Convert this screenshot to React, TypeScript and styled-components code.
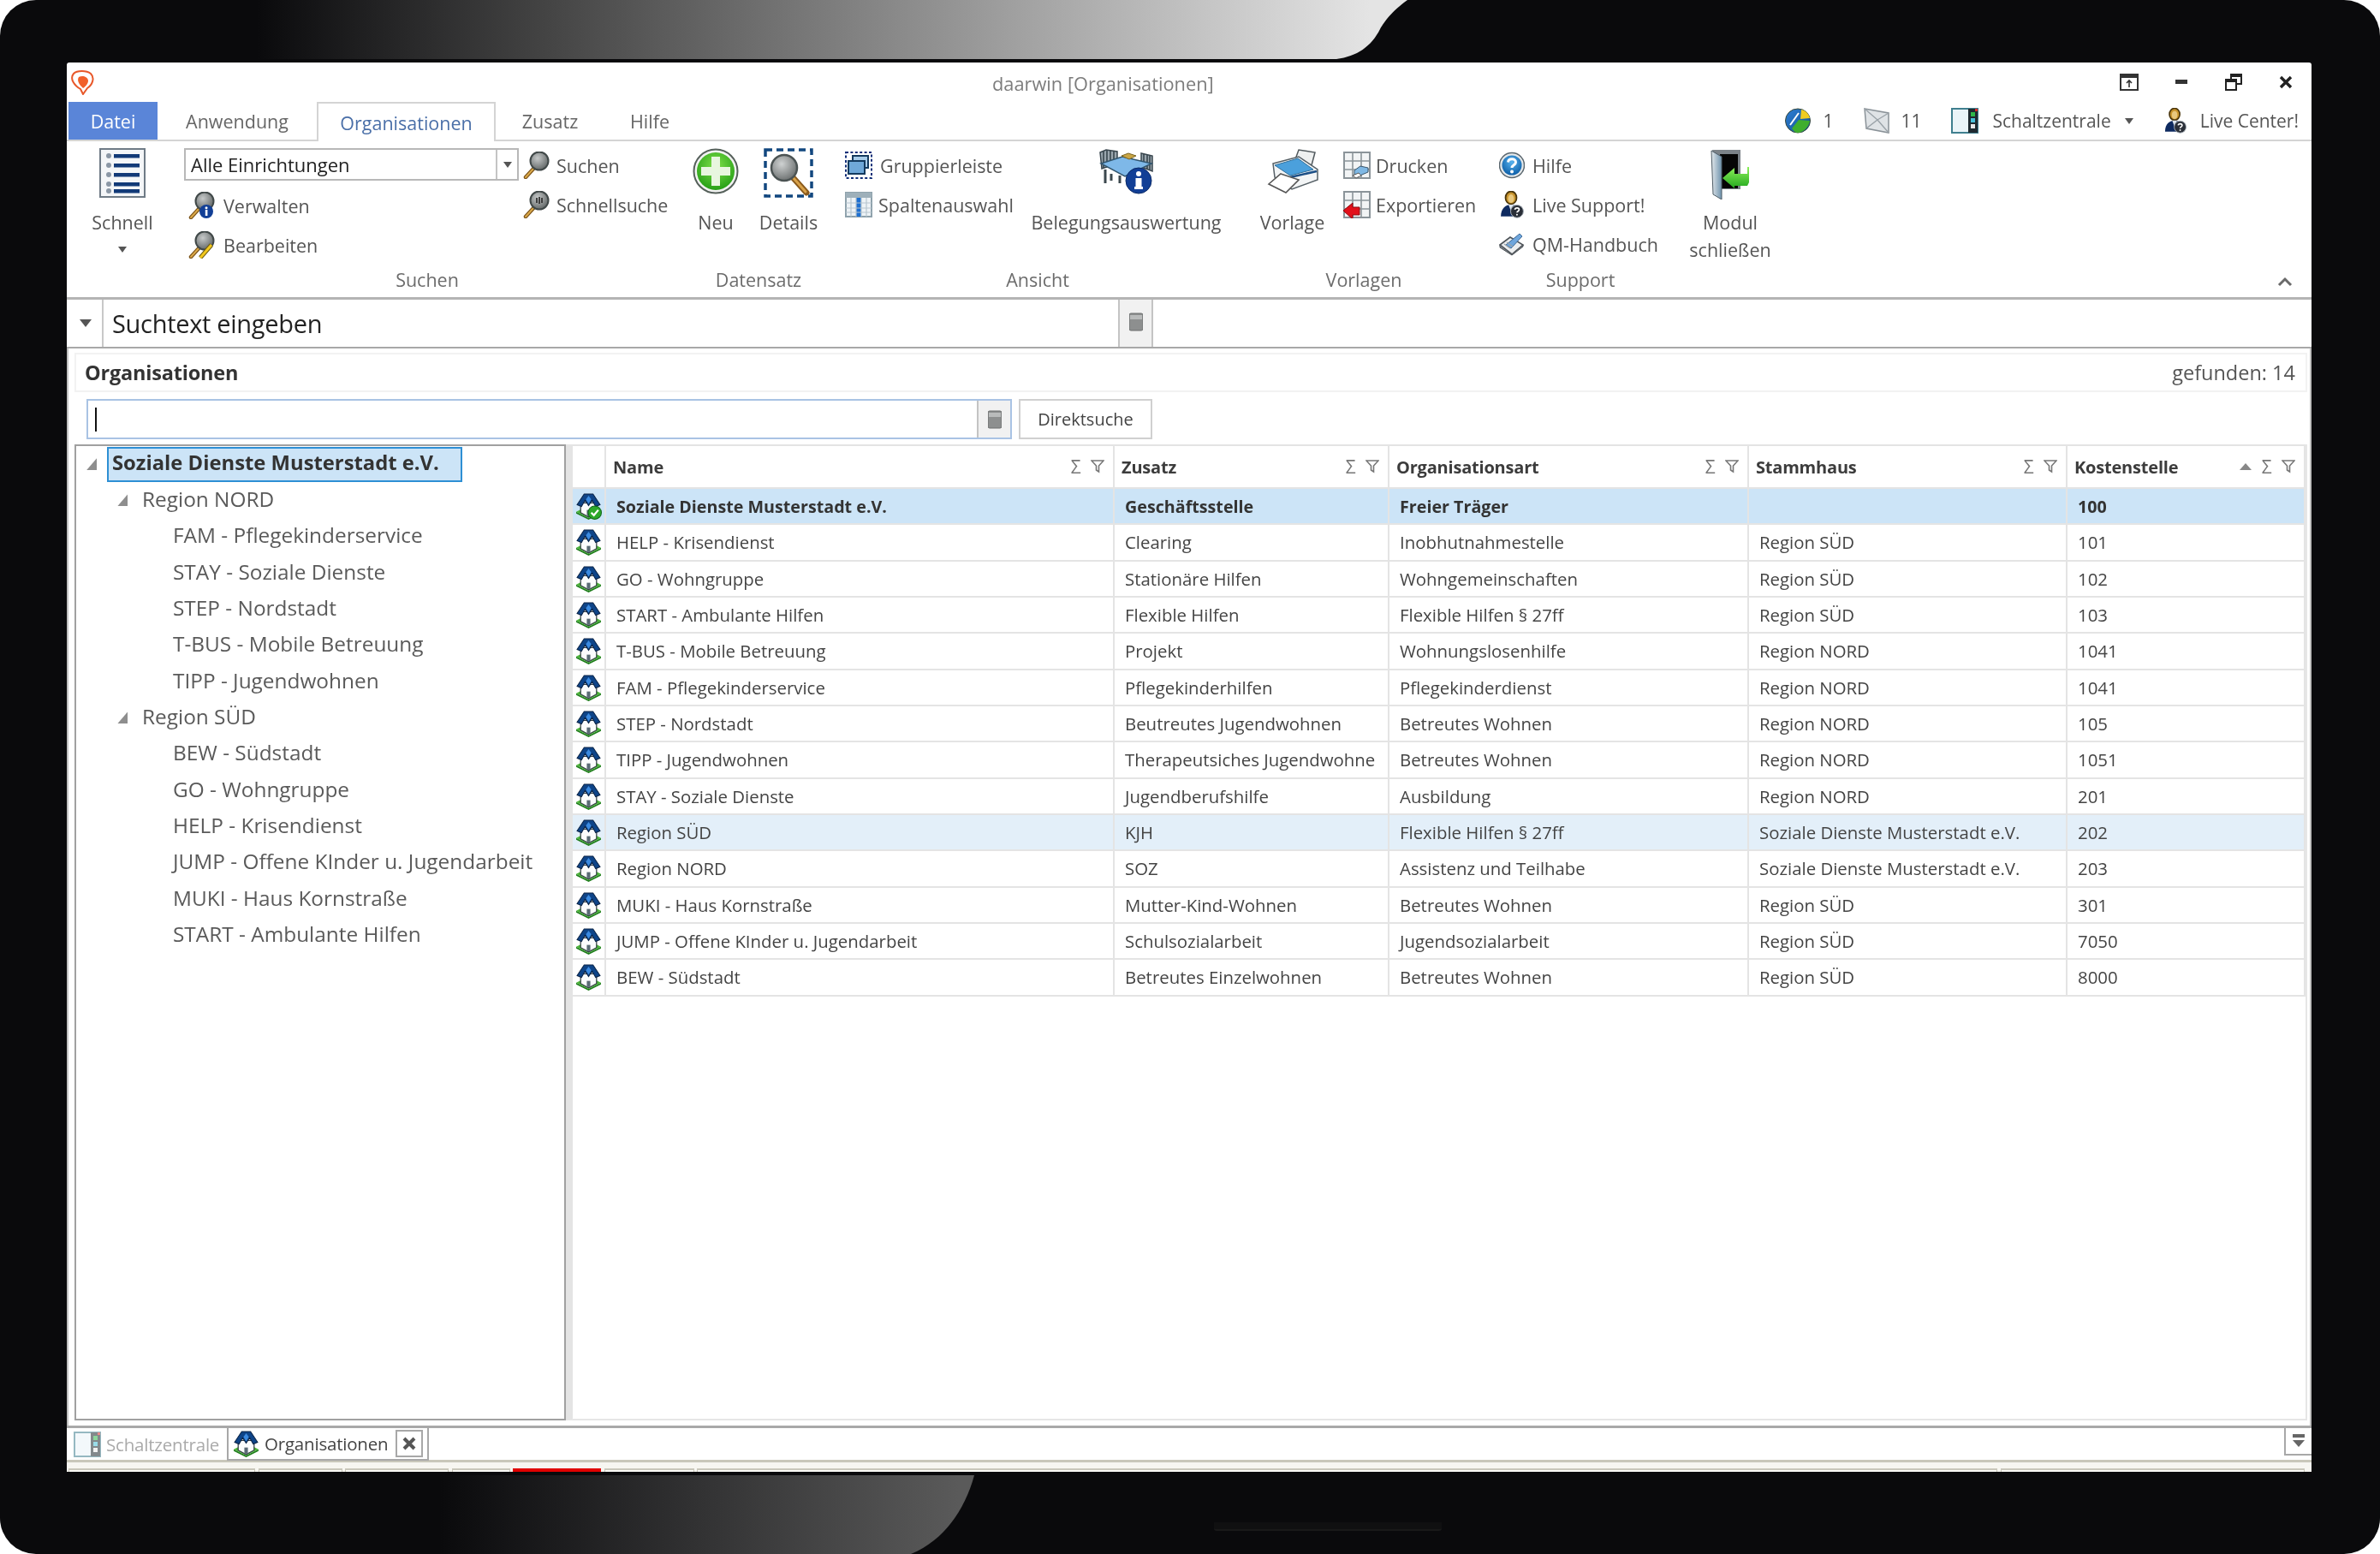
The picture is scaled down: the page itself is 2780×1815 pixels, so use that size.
import styled, { createGlobalStyle } from "styled-components";

const GlobalStyle = createGlobalStyle`
  html, body {
    margin: 0;
    padding: 0;
    background: #fff;
    font-family: "Open Sans", "Noto Sans", sans-serif;
  }
  * { box-sizing: border-box; }
`;

/* ---------- icons ---------- */

const ListIcon = () => (
  <svg width="54" height="58" viewBox="0 0 54 58">
    <rect x="1" y="1" width="52" height="56" fill="#f4f6f8" stroke="#6f7b86" strokeWidth="2" />
    {[9, 20, 31, 42, 50].map((y) => (
      <g key={y}>
        <circle cx="11" cy={y} r="3" fill="#8b97a5" />
        <rect x="17" y={y - 2} width="30" height="4.5" fill="#123a78" />
      </g>
    ))}
  </svg>
);

const Magnifier = ({ badge }: { badge?: "info" | "pencil" | "dots" }) => (
  <svg width="32" height="32" viewBox="0 0 32 32">
    <defs>
      <radialGradient id="lensSmall" cx="40%" cy="35%" r="70%">
        <stop offset="0" stopColor="#c6c9c9" />
        <stop offset="1" stopColor="#5f6464" />
      </radialGradient>
    </defs>
    <line x1="14" y1="18" x2="3" y2="30" stroke="#7a5218" strokeWidth="4.5" strokeLinecap="round" />
    <line x1="13" y1="19" x2="3" y2="30" stroke="#dba94a" strokeWidth="2" strokeLinecap="round" />
    <circle cx="19" cy="11" r="10.5" fill="url(#lensSmall)" stroke="#404848" strokeWidth="2" />
    {badge === "dots" && <path d="M16 8v6M19 7v8M22 8v6" stroke="#333" strokeWidth="1.8" />}
    {badge === "info" && (
      <g>
        <circle cx="21" cy="23" r="8" fill="#123f96" />
        <rect x="19.8" y="21" width="2.6" height="7" fill="#fff" />
        <circle cx="21" cy="18.8" r="1.5" fill="#fff" />
      </g>
    )}
    {badge === "pencil" && (
      <g>
        <line x1="27" y1="16" x2="14" y2="31" stroke="#6b5a10" strokeWidth="5" />
        <line x1="27" y1="16" x2="14" y2="31" stroke="#f2c81e" strokeWidth="3" />
      </g>
    )}
  </svg>
);

const PlusCircle = () => (
  <svg width="54" height="54" viewBox="0 0 54 54">
    <defs>
      <radialGradient id="plusGreen" cx="50%" cy="35%" r="70%">
        <stop offset="0" stopColor="#7fe04a" />
        <stop offset="1" stopColor="#1f9a12" />
      </radialGradient>
    </defs>
    <circle cx="27" cy="27" r="25.5" fill="#f2f2f2" stroke="#55605a" strokeWidth="2" />
    <circle cx="27" cy="27" r="22" fill="url(#plusGreen)" />
    <path d="M22 10h10v12h12v10H32v12H22V32H10V22h12z" fill="#e8f6df" />
  </svg>
);

const DetailsIcon = () => (
  <svg width="58" height="58" viewBox="0 0 58 58">
    <defs>
      <radialGradient id="lensBig" cx="40%" cy="35%" r="70%">
        <stop offset="0" stopColor="#cfd2d2" />
        <stop offset="1" stopColor="#686c6c" />
      </radialGradient>
    </defs>
    <rect x="2" y="2" width="54" height="54" fill="none" stroke="#12477f" strokeWidth="3.5" strokeDasharray="8 5" />
    <line x1="33" y1="33" x2="50" y2="52" stroke="#8a5a1c" strokeWidth="7" strokeLinecap="round" />
    <line x1="34" y1="34" x2="49" y2="51" stroke="#d9a24a" strokeWidth="3" strokeLinecap="round" />
    <circle cx="24" cy="23" r="15" fill="url(#lensBig)" stroke="#4b5353" strokeWidth="2.5" />
  </svg>
);

const GroupIcon = () => (
  <svg width="32" height="32" viewBox="0 0 32 32">
    <rect x="1" y="1" width="30" height="30" fill="none" stroke="#122f78" strokeWidth="2" strokeDasharray="3 2.4" />
    <rect x="9" y="5" width="18" height="14" fill="#a8cdea" stroke="#143a5e" strokeWidth="2" />
    <rect x="4" y="11" width="19" height="15" fill="#6fa8d8" stroke="#143a5e" strokeWidth="2" />
  </svg>
);

const ColumnsIcon = () => (
  <svg width="32" height="30" viewBox="0 0 32 30">
    <rect x="1" y="1" width="30" height="28" fill="#eef3f6" stroke="#8fa2ac" strokeWidth="2" />
    <rect x="1" y="1" width="30" height="6" fill="#9eb0ba" />
    <rect x="13" y="7" width="6" height="22" fill="#1d6fd0" />
    <path d="M7 7v22M13 7v22M19 7v22M25 7v22M1 13h30M1 19h30M1 24h30" stroke="#b7c6cf" strokeWidth="1.2" />
  </svg>
);

const BedIcon = () => (
  <svg width="64" height="54" viewBox="0 0 64 54">
    <path d="M1 5l7-3 13 2v14L3 24z" fill="#9aa6ae" stroke="#39464e" strokeWidth="1.5" />
    <path d="M5 4v19M9 3v19M13 3v17M17 4v14" stroke="#39464e" strokeWidth="1.6" />
    <path d="M49 6l13 3v18l-13-5z" fill="#9aa6ae" stroke="#39464e" strokeWidth="1.5" />
    <path d="M52 7v16M56 8v17M59 9v17" stroke="#39464e" strokeWidth="1.6" />
    <path d="M2 18l25-8 34 8-31 15z" fill="#7eb8e8" stroke="#31556e" strokeWidth="1.5" />
    <path d="M26 9l8-3 9 3-8 4z" fill="#c9a545" stroke="#7a6420" strokeWidth="1" />
    <path d="M7 25v16M24 32v9M14 30v8" stroke="#3c484e" strokeWidth="3" />
    <circle cx="46" cy="38" r="15" fill="#123f96" stroke="#0b2a66" />
    <rect x="42.5" y="35" width="7" height="12" fill="#fff" />
    <rect x="41" y="45" width="10" height="3" fill="#fff" />
    <circle cx="46" cy="30" r="3" fill="#fff" />
  </svg>
);

const PrinterIcon = () => (
  <svg width="62" height="54" viewBox="0 0 62 54">
    <path d="M34 13L38 2l19 3-4 15z" fill="#eef0f0" stroke="#50585c" strokeWidth="1.5" />
    <path d="M8 18l30-8 22 15v12L30 48 10 34z" fill="#f3f5f6" stroke="#566066" strokeWidth="1.5" />
    <path d="M10 20l27-8 18 13-27 7z" fill="#4ba0dc" stroke="#2e6f9c" />
    <path d="M28 34l31-7" stroke="#1c4f86" strokeWidth="2.5" />
    <path d="M17 30l21 7-15 15L3 42z" fill="#fff" stroke="#555" strokeWidth="1.6" />
  </svg>
);

const GridBase = ({ children }: { children?: React.ReactNode }) => (
  <svg width="32" height="32" viewBox="0 0 32 32">
    <rect x="1" y="1" width="30" height="30" fill="#f2f4f5" stroke="#8b9499" strokeWidth="2" />
    <path d="M11 1v30M21 1v30M1 11h30M1 21h30" stroke="#8b9499" strokeWidth="1.6" />
    {children}
  </svg>
);

const HelpIcon = () => (
  <svg width="30" height="32" viewBox="0 0 30 32">
    <defs>
      <radialGradient id="helpBlue" cx="50%" cy="35%" r="65%">
        <stop offset="0" stopColor="#58b2ee" />
        <stop offset="1" stopColor="#0d5fa8" />
      </radialGradient>
    </defs>
    <circle cx="15" cy="16" r="14.5" fill="#e4e8ea" stroke="#5a666e" strokeWidth="1.5" />
    <circle cx="15" cy="16" r="11.5" fill="url(#helpBlue)" />
    <path d="M10.5 12.5c.5-5 9-5 9 0 0 3.5-4.5 3-4.5 6.5" fill="none" stroke="#fff" strokeWidth="3" />
    <circle cx="15" cy="23.5" r="2" fill="#fff" />
  </svg>
);

const AgentIcon = ({ w = 30 }: { w?: number }) => (
  <svg width={w} height={w * 1.06} viewBox="0 0 30 32">
    <ellipse cx="14" cy="8" rx="6.5" ry="7.5" fill="#c9952e" stroke="#4a350a" strokeWidth="1.8" />
    <ellipse cx="14" cy="9" rx="3.5" ry="5" fill="#e9c87e" />
    <path d="M2 30c0-10 6-14 12-14s11 4 11 14z" fill="#0e2a60" />
    <path d="M11 16l3 8 3-8z" fill="#dde6ef" />
    <circle cx="21" cy="24" r="7.5" fill="#2a2f38" stroke="#aab2ba" strokeWidth="1" />
    <path d="M18.5 22c.3-2.6 5-2.6 5 0 0 2-2.5 1.7-2.5 3.5" fill="none" stroke="#fff" strokeWidth="1.7" />
    <circle cx="21" cy="28" r="1" fill="#fff" />
  </svg>
);

const BookIcon = () => (
  <svg width="30" height="28" viewBox="0 0 30 28">
    <path d="M1 15L13 6l15 9-13 11z" fill="#eceeef" stroke="#4d5358" strokeWidth="1.6" />
    <path d="M1 15v3l14 9 13-10v-2L15 26z" fill="#7c8186" stroke="#4d5358" />
    <path d="M8 15L24 2l3 3-13 14z" fill="#6fa6dc" stroke="#3d6a98" />
    <path d="M9 12l7 5M6 14l7 5" stroke="#9aa2a8" strokeWidth="1.2" />
  </svg>
);

const DoorIcon = () => (
  <svg width="46" height="60" viewBox="0 0 46 60">
    <defs>
      <linearGradient id="doorLeaf" x1="0" y1="0" x2="1" y2="0">
        <stop offset="0" stopColor="#e4e9ec" />
        <stop offset="1" stopColor="#6f93ad" />
      </linearGradient>
      <linearGradient id="doorArrow" x1="0" y1="0" x2="0" y2="1">
        <stop offset="0" stopColor="#8cf05a" />
        <stop offset="1" stopColor="#23a81e" />
      </linearGradient>
    </defs>
    <path d="M2 2h33v46H10z" fill="#7b8288" />
    <rect x="11" y="7" width="21" height="40" fill="#050505" />
    <path d="M1 3l12 7v50L3 54z" fill="url(#doorLeaf)" stroke="#4e5c66" strokeWidth="1" />
    <path d="M14 35l14-12v7h15v-8l2 0v18l-2 4H28v3z" fill="url(#doorArrow)" />
  </svg>
);

const HouseIcon = ({ checked, size = 31 }: { checked?: boolean; size?: number }) => (
  <svg width={size} height={size} viewBox="0 0 30 30">
    <path d="M1 21l14 7 14-7v2l-14 7-14-7z" fill="#1f7d1c" />
    <path d="M1 21l14-7 14 7-14 7z" fill="#4ab536" />
    <path d="M6 11h18v11l-9 5-9-5z" fill="#fbfcfd" stroke="#333d44" strokeWidth="1.2" />
    <path d="M10 1h10l8 12-5 2-4-7-4 6-4-6-4 7-5-2z" fill="#0e4488" stroke="#0a2346" strokeWidth="1" />
    <path d="M15 3l-3 4 3 5 3-5z" fill="#3b8ae0" />
    <rect x="13" y="19" width="4" height="7" fill="#5a6a75" />
    {checked && (
      <g>
        <circle cx="22" cy="22" r="7.5" fill="#2ca82a" stroke="#11661a" strokeWidth="1" />
        <path d="M18 22l3 3 5-6" fill="none" stroke="#fff" strokeWidth="2.2" />
      </g>
    )}
  </svg>
);

const GlobeIcon = () => (
  <svg width="32" height="30" viewBox="0 0 32 30">
    <defs>
      <linearGradient id="globeFill" x1="0" y1="0" x2="1" y2="1">
        <stop offset="0" stopColor="#2f7fd8" />
        <stop offset="1" stopColor="#0f4f8c" />
      </linearGradient>
    </defs>
    <ellipse cx="16" cy="15" rx="14.5" ry="14" fill="url(#globeFill)" stroke="#3a4a3a" />
    <path d="M20 2c5 1 9 5 10 10l-11 1z" fill="#f0cc20" />
    <path d="M9 24l8-10 13 1c-1 7-8 14-14 14-3 0-5-2-7-5z" fill="#3fae2e" />
    <path d="M7 20L17 6" stroke="#fff" strokeWidth="2" />
  </svg>
);

const EnvelopeIcon = () => (
  <svg width="32" height="30" viewBox="0 0 32 30">
    <path d="M2 1l28 5v23L4 24z" fill="#dfe3e6" stroke="#8a9298" strokeWidth="1.5" />
    <path d="M2 1l15 13L30 6M4 24l13-10 13 15" fill="none" stroke="#9aa2a8" strokeWidth="1.4" />
  </svg>
);

const PanelIcon = ({ faded }: { faded?: boolean }) => (
  <svg width="32" height="30" viewBox="0 0 32 30" opacity={faded ? 0.55 : 1}>
    <rect x="1" y="1" width="30" height="28" fill="#eaf4f8" stroke="#3f7f8f" strokeWidth="2" />
    <rect x="20" y="1" width="11" height="28" fill="#1f2a30" />
    <rect x="23" y="5" width="5" height="5" fill="#2fb84a" />
    <rect x="23" y="12" width="5" height="5" fill="#49c0d8" />
    <rect x="23" y="19" width="5" height="5" fill="#e8e8e8" />
    <rect x="28" y="1" width="3" height="3" fill="#d92b2b" />
  </svg>
);

const AppLogo = () => (
  <svg width="32" height="29" viewBox="0 0 32 29">
    <path d="M6 4c4-4 15-4 20 0 5 5 2 13-4 17l-5 7-3-6C7 18 1 10 6 4z" fill="none" stroke="#e8582a" strokeWidth="2" />
    <path d="M12 8c4-2 10-1 11 4 0 4-3 7-6 9-3-3-8-8-5-13z" fill="#f1602a" />
  </svg>
);

const FilterGlyph = () => (
  <svg width="16" height="16" viewBox="0 0 16 16">
    <path d="M1 1h14l-5.5 6v7l-3-2V7z" fill="#fff" stroke="#777" strokeWidth="1.6" />
  </svg>
);

const StackIcon = () => (
  <svg width="16" height="22" viewBox="0 0 16 22">
    <rect x="0" y="1" width="16" height="20" rx="2" fill="#8d8f8f" stroke="#6a6c6c" />
    <rect x="1" y="3" width="14" height="5" fill="#b9bbbb" />
  </svg>
);

/* ---------- data ---------- */

const COLUMNS = [
  { name: "Name", sorted: false },
  { name: "Zusatz", sorted: false },
  { name: "Organisationsart", sorted: false },
  { name: "Stammhaus", sorted: false },
  { name: "Kostenstelle", sorted: true },
];

const ROWS: string[][] = [
  ["Soziale Dienste Musterstadt e.V.", "Geschäftsstelle", "Freier Träger", "", "100"],
  ["HELP - Krisendienst", "Clearing", "Inobhutnahmestelle", "Region SÜD", "101"],
  ["GO - Wohngruppe", "Stationäre Hilfen", "Wohngemeinschaften", "Region SÜD", "102"],
  ["START - Ambulante Hilfen", "Flexible Hilfen", "Flexible Hilfen § 27ff", "Region SÜD", "103"],
  ["T-BUS - Mobile Betreuung", "Projekt", "Wohnungslosenhilfe", "Region NORD", "1041"],
  ["FAM - Pflegekinderservice", "Pflegekinderhilfen", "Pflegekinderdienst", "Region NORD", "1041"],
  ["STEP - Nordstadt", "Beutreutes Jugendwohnen", "Betreutes Wohnen", "Region NORD", "105"],
  ["TIPP - Jugendwohnen", "Therapeutsiches Jugendwohne", "Betreutes Wohnen", "Region NORD", "1051"],
  ["STAY - Soziale Dienste", "Jugendberufshilfe", "Ausbildung", "Region NORD", "201"],
  ["Region SÜD", "KJH", "Flexible Hilfen § 27ff", "Soziale Dienste Musterstadt e.V.", "202"],
  ["Region NORD", "SOZ", "Assistenz und Teilhabe", "Soziale Dienste Musterstadt e.V.", "203"],
  ["MUKI - Haus Kornstraße", "Mutter-Kind-Wohnen", "Betreutes Wohnen", "Region SÜD", "301"],
  ["JUMP - Offene KInder u. Jugendarbeit", "Schulsozialarbeit", "Jugendsozialarbeit", "Region SÜD", "7050"],
  ["BEW - Südstadt", "Betreutes Einzelwohnen", "Betreutes Wohnen", "Region SÜD", "8000"],
];

const TREE: { label: string; depth: number; open?: boolean; selected?: boolean }[] = [
  { label: "Soziale Dienste Musterstadt e.V.", depth: 0, open: true, selected: true },
  { label: "Region NORD", depth: 1, open: true },
  { label: "FAM - Pflegekinderservice", depth: 2 },
  { label: "STAY - Soziale Dienste", depth: 2 },
  { label: "STEP - Nordstadt", depth: 2 },
  { label: "T-BUS - Mobile Betreuung", depth: 2 },
  { label: "TIPP - Jugendwohnen", depth: 2 },
  { label: "Region SÜD", depth: 1, open: true },
  { label: "BEW - Südstadt", depth: 2 },
  { label: "GO - Wohngruppe", depth: 2 },
  { label: "HELP - Krisendienst", depth: 2 },
  { label: "JUMP - Offene KInder u. Jugendarbeit", depth: 2 },
  { label: "MUKI - Haus Kornstraße", depth: 2 },
  { label: "START - Ambulante Hilfen", depth: 2 },
];

const STATUS_PANELS = [
  { width: 218 },
  { width: 98 },
  { width: 121 },
  { width: 68 },
  { width: 103, alert: true },
  { width: 105 },
  { width: 1519 },
  { width: 355 },
];

/* ---------- app ---------- */

const App = () => (
  <>
    <GlobalStyle />
    <Screen>
      <Glare width="2780" height="1815" viewBox="0 0 2780 1815">
        <defs>
          <linearGradient id="glareTop" gradientUnits="userSpaceOnUse" x1="300" y1="0" x2="1600" y2="0">
            <stop offset="0" stopColor="#0a0a0c" />
            <stop offset="0.26" stopColor="#444444" />
            <stop offset="0.54" stopColor="#828282" />
            <stop offset="1" stopColor="#e4e4e4" />
          </linearGradient>
          <linearGradient id="glareBottom" gradientUnits="userSpaceOnUse" x1="514" y1="0" x2="1120" y2="0">
            <stop offset="0" stopColor="#0a0a0c" />
            <stop offset="1" stopColor="#5a5a5a" />
          </linearGradient>
        </defs>
        <path d="M300 0H1644C1625 14 1618 24 1612 34C1602 54 1585 66 1561 69H300Z" fill="url(#glareTop)" />
        <path d="M514 1723H1138C1128 1760 1105 1798 1064 1815H514Z" fill="url(#glareBottom)" />
      </Glare>
      <Window>
        <TitleBar>
          <AppLogo />
          <WindowTitle>daarwin [Organisationen]</WindowTitle>
          <WindowButtons>
            <WindowButton>
              <svg width="22" height="20" viewBox="0 0 22 20">
                <rect x="1" y="1" width="20" height="18" fill="none" stroke="#333" strokeWidth="2" />
                <rect x="1" y="1" width="20" height="4" fill="#333" />
                <path d="M11 16V8M8 11l3-3 3 3" fill="none" stroke="#333" strokeWidth="1.6" />
              </svg>
            </WindowButton>
            <WindowButton>
              <svg width="14" height="6" viewBox="0 0 14 6">
                <rect width="14" height="5" fill="#333" />
              </svg>
            </WindowButton>
            <WindowButton>
              <svg width="20" height="20" viewBox="0 0 20 20">
                <path d="M7 6V1h12v11h-6" fill="none" stroke="#222" strokeWidth="2" />
                <rect x="7" y="1" width="12" height="3" fill="#222" />
                <rect x="1" y="7" width="12" height="12" fill="#fff" stroke="#222" strokeWidth="2" />
                <rect x="1" y="7" width="12" height="3" fill="#222" />
              </svg>
            </WindowButton>
            <WindowButton>
              <svg width="16" height="16" viewBox="0 0 16 16">
                <path d="M2 2l12 12M14 2L2 14" stroke="#222" strokeWidth="3.4" />
              </svg>
            </WindowButton>
          </WindowButtons>
        </TitleBar>

        <TabRow>
          <FileTab>Datei</FileTab>
          <RibbonTab $width={186}>Anwendung</RibbonTab>
          <RibbonTab $width={209} $active>Organisationen</RibbonTab>
          <RibbonTab $width={127}>Zusatz</RibbonTab>
          <RibbonTab $width={106}>Hilfe</RibbonTab>
          <TabTools>
            <TabTool $gap={13}>
              <GlobeIcon />1
            </TabTool>
            <TabTool $gap={12}>
              <EnvelopeIcon />11
            </TabTool>
            <TabTool $gap={16}>
              <PanelIcon />
              Schaltzentrale
              <DownArrow />
            </TabTool>
            <TabTool $gap={15}>
              <AgentIcon w={28} />
              Live Center!
            </TabTool>
          </TabTools>
        </TabRow>

        <Ribbon>
          <RibbonGroup $width={124}>
            <GroupBody>
              <BigButton $width={124}>
                <BigIcon><ListIcon /></BigIcon>
                <BigLabel>Schnell</BigLabel>
                <BigLabel><DownArrow /></BigLabel>
              </BigButton>
            </GroupBody>
            <GroupLabel />
          </RibbonGroup>

          <RibbonGroup $width={588}>
            <GroupBody>
              <SmallColumn $width={389} $left={10}>
                <SmallRow>
                  <Combo>
                    <ComboText>Alle Einrichtungen</ComboText>
                    <ComboArrow><DownArrow /></ComboArrow>
                  </Combo>
                </SmallRow>
                <SmallRow $indent={5}><Magnifier badge="info" />Verwalten</SmallRow>
                <SmallRow $indent={5}><Magnifier badge="pencil" />Bearbeiten</SmallRow>
              </SmallColumn>
              <SmallColumn $left={7}>
                <SmallRow $gap={7}><Magnifier />Suchen</SmallRow>
                <SmallRow $gap={7}><Magnifier badge="dots" />Schnellsuche</SmallRow>
              </SmallColumn>
            </GroupBody>
            <GroupLabel>Suchen</GroupLabel>
          </RibbonGroup>

          <RibbonGroup $width={186}>
            <GroupBody>
              <BigButton $width={86}>
                <BigIcon><PlusCircle /></BigIcon>
                <BigLabel>Neu</BigLabel>
              </BigButton>
              <BigButton $width={84}>
                <BigIcon><DetailsIcon /></BigIcon>
                <BigLabel>Details</BigLabel>
              </BigButton>
            </GroupBody>
            <GroupLabel>Datensatz</GroupLabel>
          </RibbonGroup>

          <RibbonGroup $width={466}>
            <GroupBody>
              <SmallColumn $width={217} $left={8}>
                <SmallRow><GroupIcon />Gruppierleiste</SmallRow>
                <SmallRow $gap={7}><ColumnsIcon />Spaltenauswahl</SmallRow>
              </SmallColumn>
              <BigButton $width={223}>
                <BigIcon><BedIcon /></BigIcon>
                <BigLabel>Belegungsauswertung</BigLabel>
              </BigButton>
            </GroupBody>
            <GroupLabel>Ansicht</GroupLabel>
          </RibbonGroup>

          <RibbonGroup $width={296}>
            <GroupBody>
              <BigButton $width={77} $left={26}>
                <BigIcon><PrinterIcon /></BigIcon>
                <BigLabel>Vorlage</BigLabel>
              </BigButton>
              <SmallColumn $left={21}>
                <SmallRow $gap={6}>
                  <GridBase>
                    <path d="M13 22l7-5 9 2v5l-12 5-4-2z" fill="#7fb8e4" stroke="#39566c" />
                    <path d="M11 28l7-3 3 3-6 3z" fill="#fff" stroke="#555" />
                  </GridBase>
                  Drucken
                </SmallRow>
                <SmallRow $gap={6}>
                  <GridBase>
                    <path d="M0 23l11-9v5h8v9h-8v5z" fill="#e2101a" stroke="#8c0a10" />
                  </GridBase>
                  Exportieren
                </SmallRow>
              </SmallColumn>
            </GroupBody>
            <GroupLabel>Vorlagen</GroupLabel>
          </RibbonGroup>

          <RibbonGroup $width={210}>
            <GroupBody>
              <SmallColumn $left={10}>
                <SmallRow><HelpIcon />Hilfe</SmallRow>
                <SmallRow><AgentIcon />Live Support!</SmallRow>
                <SmallRow><BookIcon />QM-Handbuch</SmallRow>
              </SmallColumn>
            </GroupBody>
            <GroupLabel>Support</GroupLabel>
          </RibbonGroup>

          <RibbonGroup $width={140}>
            <GroupBody>
              <BigButton $width={140}>
                <BigIcon><DoorIcon /></BigIcon>
                <BigLabel>Modul</BigLabel>
                <BigLabel>schließen</BigLabel>
              </BigButton>
            </GroupBody>
            <GroupLabel />
          </RibbonGroup>

          <Collapse>
            <svg width="18" height="12" viewBox="0 0 18 12">
              <path d="M2 10l7-7 7 7" fill="none" stroke="#6a6a6a" strokeWidth="3" />
            </svg>
          </Collapse>
        </Ribbon>

        <SearchStrip>
          <SearchDrop><SearchArrow /></SearchDrop>
          <SearchText>Suchtext eingeben</SearchText>
          <SearchEnd><StackIcon /></SearchEnd>
        </SearchStrip>

        <Content>
          <PanelHeader>
            <PanelTitle>Organisationen</PanelTitle>
            <PanelCount>gefunden: 14</PanelCount>
          </PanelHeader>

          <DirectRow>
            <DirectInput>
              <Caret />
              <DirectEnd><StackIcon /></DirectEnd>
            </DirectInput>
            <DirectButton>Direktsuche</DirectButton>
          </DirectRow>

          <Main>
            <Tree>
              {TREE.map((node) => (
                <TreeRow key={node.label} $depth={node.depth}>
                  <TreeToggle>{node.open && <TreeTriangle />}</TreeToggle>
                  <TreeLabel $selected={node.selected}>{node.label}</TreeLabel>
                </TreeRow>
              ))}
            </Tree>
            <GridArea>
              <GridRow $header>
                <IconCell $header />
                {COLUMNS.map((col) => (
                  <HeaderCell key={col.name}>
                    {col.name}
                    <HeaderTools>
                      {col.sorted && <SortUp />}
                      <Sigma>Σ</Sigma>
                      <FilterGlyph />
                    </HeaderTools>
                  </HeaderCell>
                ))}
              </GridRow>
              {ROWS.map((row, i) => (
                <GridRow key={row[0]} $selected={i === 0} $marked={i === 9}>
                  <IconCell><HouseIcon checked={i === 0} /></IconCell>
                  {row.map((value, c) => (
                    <Cell key={c} $bold={i === 0}>{value}</Cell>
                  ))}
                </GridRow>
              ))}
            </GridArea>
          </Main>
        </Content>

        <DocStrip>
          <DocTab>
            <PanelIcon faded />
            <DocTabText $faded>Schaltzentrale</DocTabText>
          </DocTab>
          <DocTab $active>
            <HouseIcon />
            <DocTabText>Organisationen</DocTabText>
            <DocClose>
              <svg width="18" height="18" viewBox="0 0 18 18">
                <path d="M3 3l12 12M15 3L3 15" stroke="#555" strokeWidth="4" />
              </svg>
            </DocClose>
          </DocTab>
          <DocMenu>
            <svg width="20" height="18" viewBox="0 0 20 18">
              <rect x="3" y="1" width="14" height="4" fill="#666" />
              <path d="M3 8h14l-7 8z" fill="#666" />
            </svg>
          </DocMenu>
        </DocStrip>

        <StatusBar>
          {STATUS_PANELS.map((panel, i) => (
            <StatusPanel key={i} $width={panel.width} $alert={panel.alert} />
          ))}
        </StatusBar>
      </Window>
      <BottomBezel>
        <CameraSlot />
      </BottomBezel>
    </Screen>
  </>
);

export default App;

/* ---------- frame ---------- */

const Screen = styled.div`
  position: relative;
  width: 2780px;
  height: 1815px;
  padding-top: 73px;
  padding-left: 78px;
  background: #0a0a0c;
  border-radius: 42px;
  overflow: hidden;
  display: flex;
  flex-direction: column;
`;

const Glare = styled.svg`
  position: absolute;
  left: 0;
  top: 0;
`;

const Window = styled.div`
  position: relative;
  width: 2622px;
  height: 1646px;
  background: #fff;
  border-radius: 3px 3px 0 0;
  display: flex;
  flex-direction: column;
  color: #555;
  font-size: 21.5px;
  filter: blur(0.6px);
`;

const BottomBezel = styled.div`
  position: relative;
  flex: 1;
  padding-top: 59px;
  padding-left: 1340px;
`;

const CameraSlot = styled.div`
  width: 266px;
  height: 10px;
  background: #101011;
  border-bottom: 2px solid #191919;
  border-radius: 0 0 3px 3px;
`;

/* ---------- title bar ---------- */

const TitleBar = styled.div`
  height: 46px;
  padding-left: 2px;
  display: flex;
  align-items: center;
`;

const WindowTitle = styled.div`
  margin-left: 1047px;
  padding-top: 3px;
  color: #7c7c7c;
  font-size: 21.8px;
`;

const WindowButtons = styled.div`
  margin-left: auto;
  display: flex;
  align-items: center;
  height: 100%;
`;

const WindowButton = styled.div`
  width: 61px;
  display: flex;
  justify-content: center;
`;

/* ---------- tabs ---------- */

const TabRow = styled.div`
  height: 46px;
  padding-left: 2px;
  display: flex;
  align-items: stretch;
  border-bottom: 2px solid #d4d4d4;
`;

const FileTab = styled.div`
  width: 104px;
  background: #5a85d8;
  color: #fff;
  display: flex;
  align-items: center;
  justify-content: center;
`;

const RibbonTab = styled.div<{ $width: number; $active?: boolean }>`
  width: ${({ $width }) => $width}px;
  display: flex;
  align-items: center;
  justify-content: center;
  color: ${({ $active }) => ($active ? "#4a6fa8" : "#666")};
  margin-bottom: ${({ $active }) => ($active ? "-2px" : "0")};
  background: ${({ $active }) => ($active ? "#fff" : "transparent")};
  border: ${({ $active }) => ($active ? "2px solid #d4d4d4" : "none")};
  border-bottom: none;
`;

const TabTools = styled.div`
  margin-left: auto;
  padding-right: 15px;
  display: flex;
  align-items: center;
  gap: 35px;
  font-size: 21px;
`;

const TabTool = styled.div<{ $gap: number }>`
  display: flex;
  align-items: center;
  gap: ${({ $gap }) => $gap}px;
`;

const DownArrow = styled.span`
  display: inline-block;
  width: 0;
  height: 0;
  border-left: 5px solid transparent;
  border-right: 5px solid transparent;
  border-top: 7px solid #555;
`;

/* ---------- ribbon ---------- */

const Ribbon = styled.div`
  height: 182px;
  padding-left: 3px;
  display: flex;
`;

const RibbonGroup = styled.div<{ $width: number }>`
  width: ${({ $width }) => $width}px;
  display: flex;
  flex-direction: column;
`;

const GroupBody = styled.div`
  flex: 1;
  display: flex;
`;

const GroupLabel = styled.div`
  height: 36px;
  padding-bottom: 5px;
  display: flex;
  align-items: center;
  justify-content: center;
  color: #6c6c6c;
`;

const BigButton = styled.div<{ $width: number; $left?: number }>`
  width: ${({ $width }) => $width}px;
  margin-left: ${({ $left }) => $left ?? 0}px;
  padding-top: 8px;
  display: flex;
  flex-direction: column;
  align-items: center;
`;

const BigIcon = styled.div`
  height: 70px;
  display: flex;
  align-items: flex-start;
`;

const BigLabel = styled.div`
  height: 32px;
  display: flex;
  align-items: center;
  white-space: nowrap;
`;

const SmallColumn = styled.div<{ $width?: number; $left?: number }>`
  width: ${({ $width }) => ($width ? `${$width}px` : "auto")};
  margin-left: ${({ $left }) => $left ?? 0}px;
  padding-top: 5px;
  display: flex;
  flex-direction: column;
`;

const SmallRow = styled.div<{ $indent?: number; $gap?: number }>`
  min-height: 46px;
  padding-left: ${({ $indent }) => $indent ?? 0}px;
  display: flex;
  align-items: center;
  gap: ${({ $gap }) => $gap ?? 9}px;
  white-space: nowrap;
`;

const Combo = styled.div`
  flex: none;
  width: 391px;
  height: 38px;
  margin: 3px 0 6px;
  border: 2px solid #b8b8b8;
  display: flex;
  align-items: center;
  font-size: 22px;
`;

const ComboText = styled.div`
  flex: 1;
  padding-left: 6px;
  color: #222;
`;

const ComboArrow = styled.div`
  width: 25px;
  height: 100%;
  border-left: 2px solid #c4c4c4;
  display: flex;
  align-items: center;
  justify-content: center;
`;

const Collapse = styled.div`
  margin-left: auto;
  padding: 0 22px 6px 0;
  align-self: flex-end;
`;

/* ---------- search strip ---------- */

const SearchStrip = styled.div`
  height: 60px;
  border-top: 3px solid #b4b4b4;
  border-bottom: 2px solid #a8a8a8;
  display: flex;
  align-items: stretch;
`;

const SearchDrop = styled.div`
  width: 43px;
  padding-left: 3px;
  border-right: 2px solid #c8c8c8;
  display: flex;
  align-items: center;
  justify-content: center;
`;

const SearchArrow = styled.span`
  width: 0;
  height: 0;
  border-left: 7px solid transparent;
  border-right: 7px solid transparent;
  border-top: 9px solid #555;
`;

const SearchText = styled.div`
  width: 1185px;
  padding-left: 10px;
  display: flex;
  align-items: center;
  font-size: 29px;
  color: #222;
  letter-spacing: -0.3px;
`;

const SearchEnd = styled.div`
  width: 41px;
  padding-bottom: 4px;
  background: #f1f1f1;
  border-left: 2px solid #c4c4c4;
  border-right: 2px solid #c4c4c4;
  display: flex;
  align-items: center;
  justify-content: center;
`;

/* ---------- content ---------- */

const Content = styled.div`
  flex: 1;
  min-height: 0;
  padding: 5px 3px 6px 7px;
  border-left: 2px solid #c0c0c0;
  border-right: 2px solid #c0c0c0;
  display: flex;
  flex-direction: column;
`;

const PanelHeader = styled.div`
  height: 46px;
  margin-bottom: 8px;
  padding: 0 12px 0 10px;
  border: 2px solid #f2f2f2;
  display: flex;
  align-items: center;
  justify-content: space-between;
`;

const PanelTitle = styled.div`
  font-weight: 700;
  color: #333;
  font-size: 23.5px;
  letter-spacing: -0.2px;
`;

const PanelCount = styled.div`
  color: #555;
  font-size: 23.5px;
`;

const DirectRow = styled.div`
  height: 47px;
  margin-bottom: 6px;
  padding-left: 14px;
  display: flex;
  gap: 8px;
`;

const DirectInput = styled.div`
  width: 1081px;
  padding-left: 8px;
  border: 2px solid #a9c3e4;
  display: flex;
  align-items: center;
  justify-content: space-between;
`;

const Caret = styled.div`
  width: 2px;
  height: 28px;
  background: #111;
`;

const DirectEnd = styled.div`
  width: 39px;
  height: 100%;
  background: #f1f1f1;
  border-left: 2px solid #c4c4c4;
  display: flex;
  align-items: center;
  justify-content: center;
`;

const DirectButton = styled.div`
  width: 156px;
  border: 2px solid #d0d0d0;
  display: flex;
  align-items: center;
  justify-content: center;
  color: #444;
  font-size: 20px;
`;

const Main = styled.div`
  flex: 1;
  min-height: 0;
  display: flex;
`;

/* ---------- tree ---------- */

const Tree = styled.div`
  width: 574px;
  border: 2px solid #a0a0a0;
  flex: none;
`;

const TreeRow = styled.div<{ $depth: number }>`
  height: 42.33px;
  padding-left: ${({ $depth }) => $depth * 36}px;
  display: flex;
  align-items: center;
`;

const TreeToggle = styled.div`
  width: 36px;
  display: flex;
  justify-content: center;
`;

const TreeTriangle = styled.div`
  width: 12px;
  height: 14px;
  background: #8e8e8e;
  clip-path: polygon(100% 0, 100% 100%, 0 100%);
`;

const TreeLabel = styled.div<{ $selected?: boolean }>`
  white-space: nowrap;
  padding-bottom: 4px;
  ${({ $selected }) =>
    $selected
      ? `
    width: 415px;
    height: 41px;
    padding-left: 4px;
    display: flex;
    align-items: center;
    font-size: 23.8px;
    font-weight: 700;
    color: #333;
    background: #cce4f7;
    border: 2px solid #2e8fd4;
  `
      : `
    padding-left: 5px;
    font-size: 24.4px;
    color: #5a5a5a;
  `}
`;

/* ---------- grid ---------- */

const GridArea = styled.div`
  flex: 1;
  min-width: 0;
  border-left: 8px solid #e4e4e4;
  border-bottom: 2px solid #e6e6e6;
  border-right: 2px solid #e6e6e6;
`;

const GridRow = styled.div<{ $header?: boolean; $selected?: boolean; $marked?: boolean }>`
  width: 2024px;
  height: ${({ $header }) => ($header ? "52px" : "42.33px")};
  display: grid;
  grid-template-columns: 39px 594px 321px 420px 372px 278px;
  background: ${({ $selected, $marked }) => ($selected ? "#cce4f7" : $marked ? "#e3eff9" : "#fff")};
  border-top: ${({ $header }) => ($header ? "2px solid #e4e4e4" : "none")};
`;

const IconCell = styled.div<{ $header?: boolean }>`
  padding-top: 1px;
  display: flex;
  align-items: center;
  justify-content: center;
  border-right: 2px solid #e4e4e4;
  border-bottom: 2px solid #e4e4e4;
`;

const HeaderCell = styled.div`
  padding: 0 10px 0 8px;
  display: flex;
  align-items: center;
  border-right: 2px solid #e4e4e4;
  border-bottom: 2px solid #e4e4e4;
  font-weight: 700;
  font-size: 20px;
  color: #3c3c3c;
  letter-spacing: -0.2px;
`;

const HeaderTools = styled.div`
  margin-left: auto;
  display: flex;
  align-items: center;
  gap: 10px;
`;

const Sigma = styled.span`
  width: 15px;
  font-weight: 400;
  font-size: 21px;
  color: #777;
  text-align: center;
`;

const SortUp = styled.span`
  width: 0;
  height: 0;
  border-left: 7px solid transparent;
  border-right: 7px solid transparent;
  border-bottom: 8px solid #888;
`;

const Cell = styled.div<{ $bold?: boolean }>`
  padding-left: 12px;
  display: flex;
  align-items: center;
  overflow: hidden;
  white-space: nowrap;
  border-right: 2px solid #e4e4e4;
  border-bottom: 2px solid #e4e4e4;
  font-size: ${({ $bold }) => ($bold ? "19.7px" : "20.4px")};
  font-weight: ${({ $bold }) => ($bold ? 700 : 400)};
  color: ${({ $bold }) => ($bold ? "#333" : "#444")};
`;

/* ---------- document strip ---------- */

const DocStrip = styled.div`
  height: 43px;
  border-top: 3px solid #a8a8a8;
  border-bottom: 3px solid #c9c7ba;
  display: flex;
`;

const DocTab = styled.div<{ $active?: boolean }>`
  height: ${({ $active }) => ($active ? "38px" : "auto")};
  padding: 0 5px 0 ${({ $active }) => ($active ? "5px" : "8px")};
  display: flex;
  align-items: center;
  gap: 6px;
  background: #fff;
  border-left: ${({ $active }) => ($active ? "2px solid #a8a8a8" : "none")};
  border-right: ${({ $active }) => ($active ? "2px solid #a8a8a8" : "none")};
  border-bottom: ${({ $active }) => ($active ? "2px solid #a8a8a8" : "none")};
  width: ${({ $active }) => ($active ? "236px" : "187px")};
`;

const DocTabText = styled.span<{ $faded?: boolean }>`
  font-size: 20.5px;
  white-space: nowrap;
  letter-spacing: -0.2px;
  color: ${({ $faded }) => ($faded ? "#aaa" : "#444")};
`;

const DocClose = styled.div`
  width: 32px;
  height: 32px;
  flex: none;
  margin-left: auto;
  border: 2px solid #a8a8a8;
  display: flex;
  align-items: center;
  justify-content: center;
`;

const DocMenu = styled.div`
  margin-left: auto;
  width: 32px;
  height: 32px;
  border-left: 2px solid #a8a8a8;
  border-bottom: 2px solid #a8a8a8;
  display: flex;
  align-items: center;
  justify-content: center;
`;

/* ---------- status bar ---------- */

const StatusBar = styled.div`
  height: 11px;
  padding: 7px 0 0 2px;
  background: #f7f6f1;
  display: flex;
  gap: 3.5px;
`;

const StatusPanel = styled.div<{ $width: number; $alert?: boolean }>`
  width: ${({ $width }) => $width}px;
  background: ${({ $alert }) => ($alert ? "#e00000" : "#fbfaf6")};
  border-top: 2px solid ${({ $alert }) => ($alert ? "#e00000" : "#c9c7ba")};
  border-left: 1px solid ${({ $alert }) => ($alert ? "#e00000" : "#c9c7ba")};
  border-right: 1px solid ${({ $alert }) => ($alert ? "#e00000" : "#c9c7ba")};
`;
